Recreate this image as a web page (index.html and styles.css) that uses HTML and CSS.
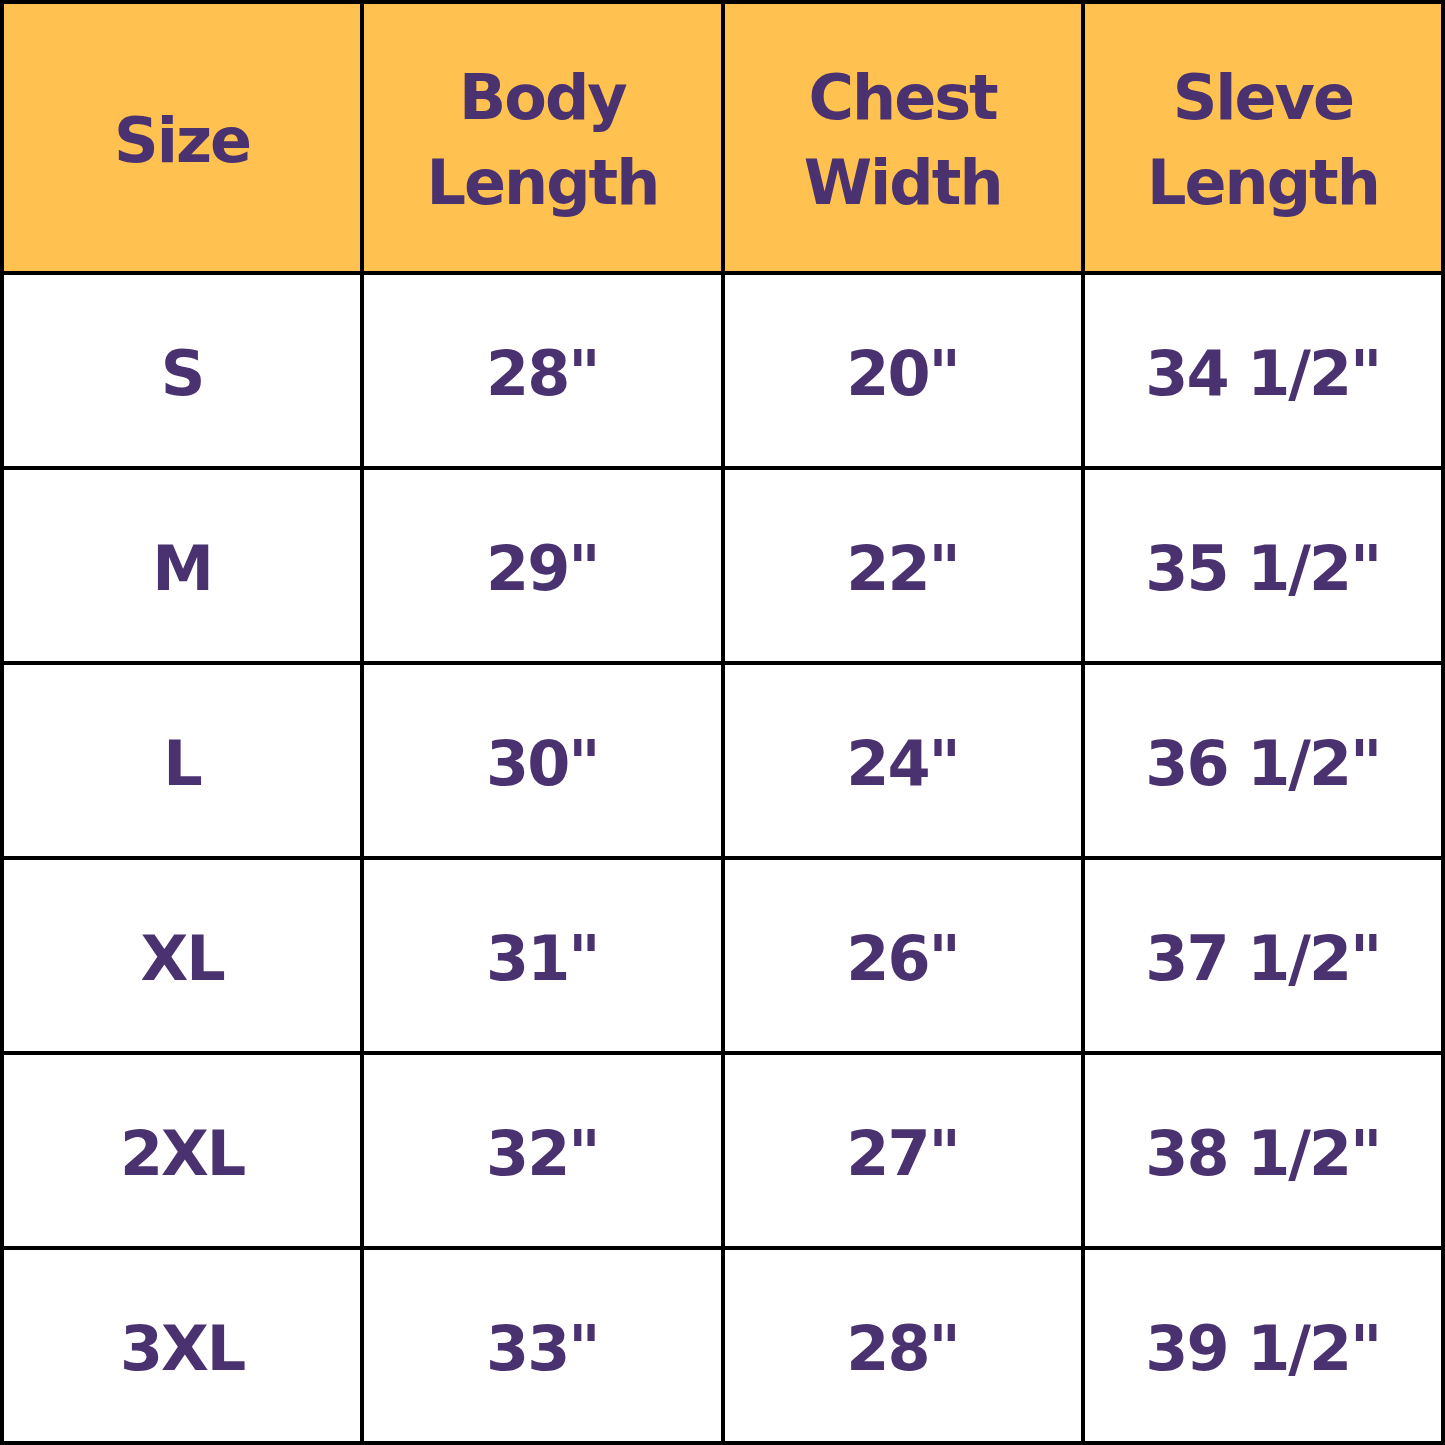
FILE: index.html
```html
<!DOCTYPE html>
<html>
<head>
<meta charset="utf-8">
<link rel="stylesheet" href="styles.css">
</head>
<body>
<div class="chart">
  <div class="cell head">Size</div>
  <div class="cell head">Body<br>Length</div>
  <div class="cell head">Chest<br>Width</div>
  <div class="cell head">Sleve<br>Length</div>

  <div class="cell">S</div><div class="cell">28"</div><div class="cell">20"</div><div class="cell">34 1/2"</div>
  <div class="cell">M</div><div class="cell">29"</div><div class="cell">22"</div><div class="cell">35 1/2"</div>
  <div class="cell">L</div><div class="cell">30"</div><div class="cell">24"</div><div class="cell">36 1/2"</div>
  <div class="cell">XL</div><div class="cell">31"</div><div class="cell">26"</div><div class="cell">37 1/2"</div>
  <div class="cell">2XL</div><div class="cell">32"</div><div class="cell">27"</div><div class="cell">38 1/2"</div>
  <div class="cell">3XL</div><div class="cell">33"</div><div class="cell">28"</div><div class="cell">39 1/2"</div>
</div>
</body>
</html>
```
FILE: styles.css
```css
html, body {
  margin: 0;
  padding: 0;
  background: #ffffff;
}
.chart {
  width: 1445px;
  height: 1445px;
  box-sizing: border-box;
  background: #000000;
  padding: 4px;
  display: grid;
  grid-template-columns: repeat(4, 1fr);
  grid-template-rows: 267px repeat(6, 191px);
  gap: 4px;
}
.cell {
  background: #ffffff;
  display: flex;
  align-items: center;
  justify-content: center;
  text-align: center;
  padding-top: 5px;
  box-sizing: border-box;
  font-family: "DejaVu Sans", sans-serif;
  font-weight: bold;
  font-size: 62px;
  letter-spacing: -2px;
  color: #4a3270;
  line-height: 85px;
}
.head {
  background: #ffc14f;
}
```
